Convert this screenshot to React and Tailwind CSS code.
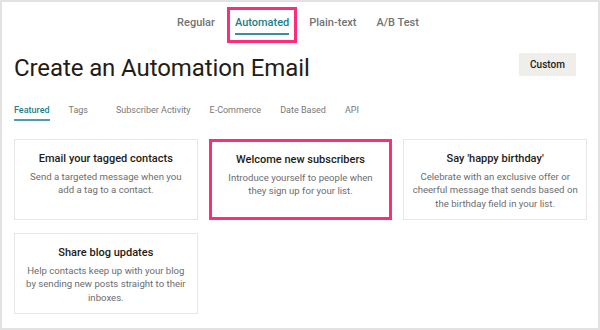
export default function App() {
  const topTabs = ["Regular", "Automated", "Plain-text", "A/B Test"];
  const cards = [
    { t: "Email your tagged contacts", d: "Send a targeted message when you add a tag to a contact." },
    { t: "Welcome new subscribers", d: "Introduce yourself to people when they sign up for your list.", hl: true },
    { t: "Say 'happy birthday'", d: "Celebrate with an exclusive offer or cheerful message that sends based on the birthday field in your list." },
    { t: "Share blog updates", d: "Help contacts keep up with your blog by sending new posts straight to their inboxes." },
  ];
  return (
    <div className="w-[600px] h-[330px] overflow-hidden bg-white border-2 border-[#e2e2e2] font-['Roboto',sans-serif]">
      <div className="flex justify-center gap-1 pt-[5px] pr-1">
        {topTabs.map((t) => {
          const active = t === "Automated";
          return (
            <div
              key={t}
              className={`h-[36px] px-[5px] border-[3px] flex flex-col items-center ${active ? "border-[#fd2d79]" : "border-transparent"}`}
            >
              <div className={`pt-[6px] text-[11px] leading-[14px] font-medium ${active ? "text-[#1b7f89]" : "text-[#727272]"}`}>{t}</div>
              {active && <div className="mt-[3px] h-[2px] w-full bg-[#3a8f98]" />}
            </div>
          );
        })}
      </div>
      <div className="flex justify-between items-start h-[28px] mt-[10px] px-[12px]">
        <h1 className="mt-[3px] text-[24px] leading-[24px] text-[#241c15] font-normal tracking-[-0.1px]">Create an Automation Email</h1>
        <button className="mr-[10px] w-[57px] h-[23px] bg-[#efeeea] text-[#241c15] text-[10px] font-medium rounded-[1px]">Custom</button>
      </div>
      <div className="flex gap-[19px] mt-[23px] px-[12px]">
        {["Featured", "Tags", "Subscriber Activity", "E-Commerce", "Date Based", "API"].map((t, i) => (
          <div key={t} className={`flex flex-col ${t === "Tags" ? "mr-[9px]" : ""}`}>
            <div className={`text-[9px] leading-[12px] ${i === 0 ? "text-[#1b7f89] font-medium" : "text-[#787878]"}`}>{t}</div>
            {i === 0 ? <div className="mt-[3px] h-[2px] bg-[#4e9ea5]" /> : <div className="mt-[3px] h-[2px]" />}
          </div>
        ))}
      </div>
      <div className="grid grid-cols-3 gap-x-[11px] gap-y-[13px] mt-[18px] pl-[12px] pr-[11px]">
        {cards.map((c) => (
          <div
            key={c.t}
            className={`h-[81px] flex flex-col items-center text-center px-[8px] ${c.hl ? "border-[3px] border-[#fd2d79] pt-[11px]" : "border border-[#e6e6e6] pt-[12px]"}`}
          >
            <div className="text-[11px] leading-[14px] font-medium text-[#241c15]">{c.t}</div>
            <div className="mt-[4px] text-[9.6px] leading-[13.3px] text-[#6d6d6d]">{c.d}</div>
          </div>
        ))}
      </div>
    </div>
  );
}
